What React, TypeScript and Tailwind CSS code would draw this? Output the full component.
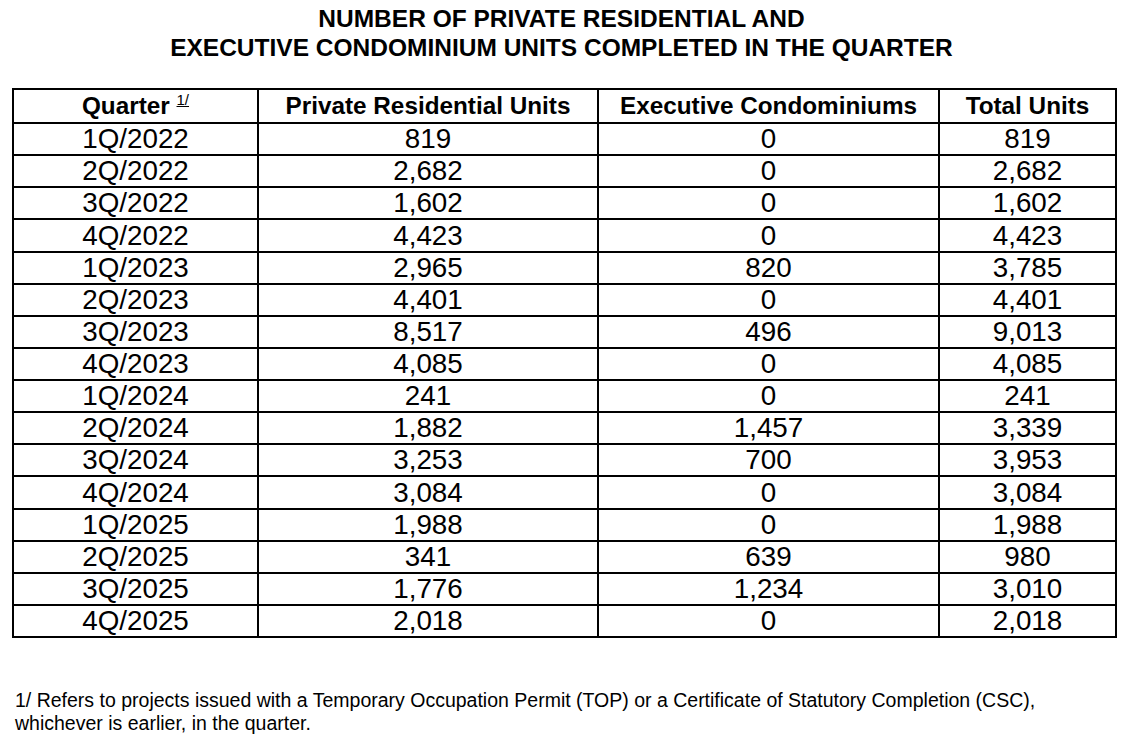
const ROWS: [string, string, string, string][] = [
  ["1Q/2022", "819", "0", "819"],
  ["2Q/2022", "2,682", "0", "2,682"],
  ["3Q/2022", "1,602", "0", "1,602"],
  ["4Q/2022", "4,423", "0", "4,423"],
  ["1Q/2023", "2,965", "820", "3,785"],
  ["2Q/2023", "4,401", "0", "4,401"],
  ["3Q/2023", "8,517", "496", "9,013"],
  ["4Q/2023", "4,085", "0", "4,085"],
  ["1Q/2024", "241", "0", "241"],
  ["2Q/2024", "1,882", "1,457", "3,339"],
  ["3Q/2024", "3,253", "700", "3,953"],
  ["4Q/2024", "3,084", "0", "3,084"],
  ["1Q/2025", "1,988", "0", "1,988"],
  ["2Q/2025", "341", "639", "980"],
  ["3Q/2025", "1,776", "1,234", "3,010"],
  ["4Q/2025", "2,018", "0", "2,018"],
];

export default function App() {
  return (
    <div className="min-h-screen bg-white px-[12px] pt-[4px] text-black [font-family:'Liberation_Sans',Arial,sans-serif]">
      <h1 className="text-center text-[24.5px] font-bold leading-[29px]">
        NUMBER OF PRIVATE RESIDENTIAL AND
        <br />
        EXECUTIVE CONDOMINIUM UNITS COMPLETED IN THE QUARTER
      </h1>

      <table className="mt-[26px] w-[1103px] table-fixed border-collapse border-2 border-black">
        <colgroup>
          <col className="w-[245px]" />
          <col className="w-[340px]" />
          <col className="w-[341px]" />
          <col className="w-[177px]" />
        </colgroup>
        <thead>
          <tr className="h-[34px]">
            <th className="border-2 border-black p-0 text-[24.3px] font-bold leading-none">
              Quarter{" "}
              <span className="relative -top-[9px] text-[15px] font-normal underline">1/</span>
            </th>
            <th className="border-2 border-black p-0 text-[24.3px] font-bold leading-none">
              Private Residential Units
            </th>
            <th className="border-2 border-black p-0 text-[24.3px] font-bold leading-none">
              Executive Condominiums
            </th>
            <th className="border-2 border-black p-0 text-[24.3px] font-bold leading-none">
              Total Units
            </th>
          </tr>
        </thead>
        <tbody>
          {ROWS.map((row) => (
            <tr key={row[0]} className="h-[32.13px]">
              {row.map((cell, i) => (
                <td key={i} className="border-2 border-black p-0 text-center text-[27.8px] leading-none">
                  {cell}
                </td>
              ))}
            </tr>
          ))}
        </tbody>
      </table>

      <p className="mt-[51px] pl-[3px] text-[19.5px] leading-[23px]">
        1/ Refers to projects issued with a Temporary Occupation Permit (TOP) or a Certificate of Statutory Completion (CSC),
        <br />
        whichever is earlier, in the quarter.
      </p>
    </div>
  );
}
